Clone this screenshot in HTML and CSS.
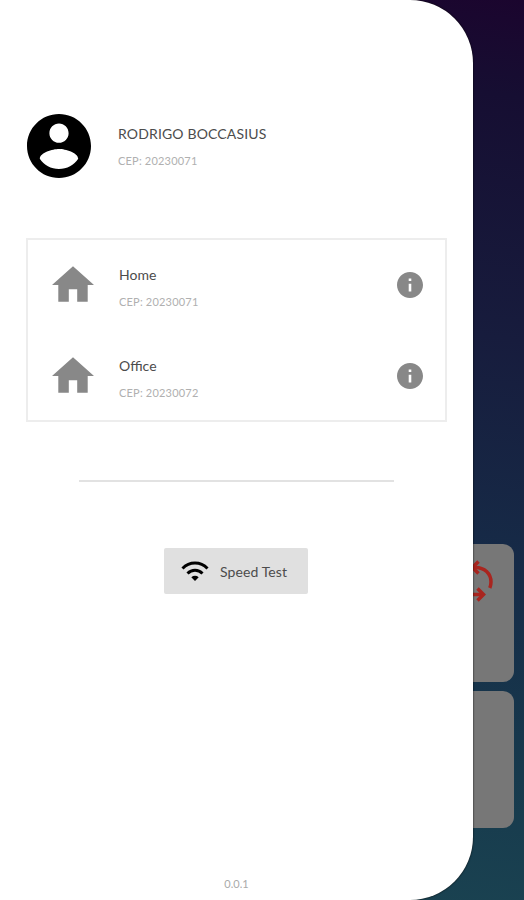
FILE: index.html
```html
<!DOCTYPE html>
<html lang="en">
<head>
  <meta charset="UTF-8" />
  <meta name="viewport" content="width=device-width, initial-scale=1" />
  <title>Menu</title>
  <link rel="stylesheet" href="styles.css">
</head>
<body>
  <main class="dashboard">
    <div class="card">
      <svg class="sync" viewBox="0 0 50 44" aria-hidden="true">
        <path d="M29 7.500h2.500c9 0 15.500 6 15.500 14.500 0 2.500-.400 4-1.200 6" />
        <path d="M34.500 1.500L28.500 7.500L34.500 13.500" />
        <path d="M20 34.500h19" />
        <path d="M33.500 28.500L39.500 34.500L33.500 40.500" />
      </svg>
    </div>
    <div class="card"></div>
  </main>

  <aside class="drawer">
    <header class="profile">
      <svg class="avatar" viewBox="2 2 20 20">
        <path d="M12 2C6.480 2 2 6.480 2 12s4.480 10 10 10 10-4.480 10-10S17.520 2 12 2zm0 3c1.660 0 3 1.340 3 3s-1.340 3-3 3-3-1.340-3-3 1.340-3 3-3zm0 14.200c-2.500 0-4.710-1.280-6-3.220.030-1.990 4-3.080 6-3.080 1.990 0 5.970 1.090 6 3.080-1.290 1.940-3.500 3.220-6 3.220z" />
      </svg>
      <div class="info-text">
        <h1>RODRIGO BOCCASIUS</h1>
        <p>CEP: 20230071</p>
      </div>
    </header>

    <ul class="places">
      <li class="place">
        <svg class="home" viewBox="2 3 20 17"><path d="M10 20v-6h4v6h5v-8h3L12 3 2 12h3v8z" /></svg>
        <div class="info-text">
          <h2>Home</h2>
          <p>CEP: 20230071</p>
        </div>
        <svg class="details" viewBox="2 2 20 20"><path d="M12 2C6.480 2 2 6.480 2 12s4.480 10 10 10 10-4.480 10-10S17.520 2 12 2zm1 15h-2v-6h2v6zm0-8h-2V7h2v2z" /></svg>
      </li>
      <li class="place">
        <svg class="home" viewBox="2 3 20 17"><path d="M10 20v-6h4v6h5v-8h3L12 3 2 12h3v8z" /></svg>
        <div class="info-text">
          <h2>Office</h2>
          <p>CEP: 20230072</p>
        </div>
        <svg class="details" viewBox="2 2 20 20"><path d="M12 2C6.480 2 2 6.480 2 12s4.480 10 10 10 10-4.480 10-10S17.520 2 12 2zm1 15h-2v-6h2v6zm0-8h-2V7h2v2z" /></svg>
      </li>
    </ul>

    <hr class="divider">

    <button class="speed-test">
      <svg class="wifi" viewBox="0 0 28 20">
        <path d="M1.500 7.500C8.500 0.300 19.500 0.300 26.500 7.500" />
        <path d="M6.500 12.500C10.800 8.300 17.200 8.300 21.500 12.500" />
        <path class="dot" d="M10.300 16.200Q14 13.500 17.700 16.200L14 20z" />
      </svg>
      Speed Test
    </button>

    <footer class="version">0.0.1</footer>
  </aside>
</body>
</html>
```

FILE: styles.css
```css
* {
  box-sizing: border-box;
}
body {
  margin: 0;
  height: 900px;
  overflow: hidden;
  font-family: Lato, "Liberation Sans", sans-serif;
  position: relative;
}
h1, h2, p {
  margin: 0;
  font-weight: 400;
}
svg {
  display: block;
  flex: none;
}

/* Dimmed screen behind the drawer */
.dashboard {
  height: 100%;
  padding: 544px 10px 72px;
  display: flex;
  flex-direction: column;
  gap: 9px;
  background: linear-gradient(188deg, #1b052e 0%, #160e32 10%, #171c3d 35%, #162c48 60%, #173a4d 80%, #1b4552 100%);
}
.card {
  flex: 1;
  display: flex;
  justify-content: flex-end;
  padding: 16px 20px;
  background: #777;
  border-radius: 11px;
}
.sync {
  width: 50px;
  height: 44px;
  fill: none;
  stroke: #a9251f;
  stroke-width: 3.5;
}

/* Drawer */
.drawer {
  position: absolute;
  top: 0;
  left: 0;
  width: 472.5px;
  height: 900px;
  padding: 114px 25.5px 9px 26px;
  display: flex;
  flex-direction: column;
  background: #fff;
  border-radius: 0 63px 63px 0;
  box-shadow: 0 0 2px #000;
}
.profile {
  display: flex;
  gap: 27px;
  padding-left: 1px;
}
.avatar {
  width: 64px;
  height: 64px;
}
.info-text h1, .info-text h2 {
  font-size: 14px;
  line-height: 20px;
  color: #4c4c4c;
}
.info-text h1 {
  letter-spacing: 0.15px;
}
.info-text p {
  margin-top: 9px;
  font-size: 11px;
  line-height: 16px;
  letter-spacing: 0.2px;
  color: #b0b0b0;
}
.profile .info-text {
  padding-top: 10px;
}
.places {
  list-style: none;
  margin: 60px 0 0;
  padding: 0;
  height: 184px;
  border: 2px solid #ededed;
}
.place {
  display: flex;
  height: 91px;
  padding: 25px 22px 0 24px;
}
.home {
  width: 42px;
  height: 36px;
  margin-top: 1px;
  fill: #888;
}
.place .info-text {
  flex: 1;
  margin-left: 25px;
}
.details {
  width: 26px;
  height: 26px;
  margin-top: 7px;
  fill: #888;
}
.divider {
  width: 315px;
  height: 2px;
  margin: 58px 0 0 53px;
  border: none;
  background: #e2e2e2;
}
.speed-test {
  display: flex;
  align-items: center;
  gap: 11px;
  width: 144px;
  height: 46px;
  margin: 66px 0 0 138px;
  padding: 0 0 0 17px;
  border: none;
  border-radius: 2px;
  background: #e0e0e0;
  color: #4c4c4c;
  font: 14px Lato, sans-serif;
  letter-spacing: 0.1px;
}
.wifi {
  width: 28px;
  height: 20px;
  fill: none;
  stroke: #000;
  stroke-width: 3;
}
.wifi .dot {
  fill: #000;
  stroke: none;
}
.version {
  margin-top: auto;
  text-align: center;
  font-size: 11px;
  line-height: 14px;
  color: #aaa;
}
```
